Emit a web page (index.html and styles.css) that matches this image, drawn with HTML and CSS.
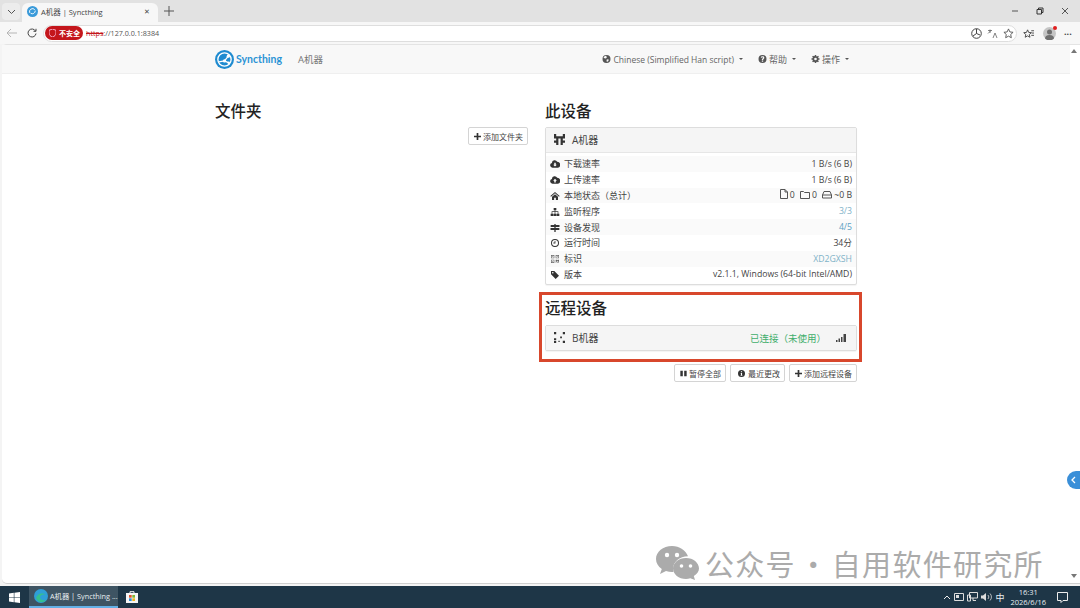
FILE: index.html
```html
<!DOCTYPE html>
<html lang="zh-CN">
<head>
  <meta charset="UTF-8" />
  <meta name="viewport" content="width=device-width, initial-scale=1.0"/>
  <title>A机器 | Syncthing</title>
  <link rel="stylesheet" href="styles.css">
</head>
<body>
  <svg class="sprite" aria-hidden="true">
    <symbol id="i-down" viewBox="0 0 16 12"><path d="M4 12a4 4 0 0 1-1-7.800A4.500 4.500 0 0 1 11.500 2.500 4.800 4.800 0 0 1 12.500 12z"/><path fill="#fff" d="M6.800 4h2.400v3H11L8 10 5 7h1.800z"/></symbol>
    <symbol id="i-up" viewBox="0 0 16 12"><path d="M4 12a4 4 0 0 1-1-7.800A4.500 4.500 0 0 1 11.500 2.500 4.800 4.800 0 0 1 12.500 12z"/><path fill="#fff" d="M6.800 10h2.400V7H11L8 4 5 7h1.800z"/></symbol>
    <symbol id="i-home" viewBox="0 0 14 12"><path d="M7 0l7 6-1 1-6-5-6 5-1-1zM2.500 7L7 3.300 11.500 7v5H8.300V8.500H5.700V12H2.500z"/></symbol>
    <symbol id="i-sitemap" viewBox="0 0 14 12"><path d="M5 0h4v3.500H7.500V5H12v3.500h1.500V12h-4V8.500H11V6H7.500v2.500H9V12H5V8.500h1.500V6H3v2.500h1.500V12h-4V8.500H2V5h4.500V3.500H5z"/></symbol>
    <symbol id="i-signs" viewBox="0 0 14 12"><path d="M6 0h2v1.500h5.500L14 3l-.5 1.500H8v1.500h5.500v3H8V12H6V9H.5L0 7.500.5 6H6V4.500H.5v-3H6z"/></symbol>
    <symbol id="i-clock" viewBox="0 0 12 12"><path fill-rule="evenodd" d="M6 0a6 6 0 1 1 0 12A6 6 0 0 1 6 0zm0 1.500a4.500 4.500 0 1 0 0 9 4.500 4.500 0 0 0 0-9zM5.400 3h1.200v3.600H3.500V5.400h1.900z"/></symbol>
    <symbol id="i-qr" viewBox="0 0 12 12"><path fill-rule="evenodd" d="M0 0h5v5H0zm1 1v3h3V1zm6-1h5v5H7zm1 1v3h3V1zM0 7h5v5H0zm1 1v3h3V8zm1-6h1v1H2zm7 0h1v1H9zM2 9h1v1H2zm5-2h2v1h1V7h2v3h-2V9H9v1H7zm0 4h1v1H7zm2 0h1v1H9zm2 0h1v1h-1z"/></symbol>
    <symbol id="i-tag" viewBox="0 0 12 12"><path fill-rule="evenodd" d="M0 0h5l7 7-5 5-7-7zm2.700 1.500a1.200 1.200 0 1 0 0 2.400 1.200 1.200 0 0 0 0-2.400z"/></symbol>
    <symbol id="i-plus" viewBox="0 0 10 10"><path d="M3.800 0h2.400v3.800H10v2.400H6.200V10H3.800V6.200H0V3.800h3.800z"/></symbol>
    <symbol id="i-pause" viewBox="0 0 10 10"><path d="M.5 1h3.500v8H.5zM6 1h3.500v8H6z"/></symbol>
    <symbol id="i-info" viewBox="0 0 12 12"><path fill-rule="evenodd" d="M6 0a6 6 0 1 1 0 12A6 6 0 0 1 6 0zM5 2.200v1.800h2V2.200zM4.500 5v1.200H5v2.300h-.5v1.200h3V8.500H7V5z"/></symbol>
    <symbol id="i-help" viewBox="0 0 12 12"><path fill-rule="evenodd" d="M6 0a6 6 0 1 1 0 12A6 6 0 0 1 6 0zM5 8.200V10h2V8.200zM6 2C4.600 2 3.700 2.700 3.400 3.900l1.500.4c.2-.6.500-.9 1.100-.9.500 0 .8.300.8.700 0 .9-1.800 1.100-1.800 2.900v.4h1.800c0-1.300 1.900-1.500 1.900-3.400C8.700 2.800 7.500 2 6 2z"/></symbol>
    <symbol id="i-cog" viewBox="0 0 12 12"><path fill-rule="evenodd" d="M5 0h2l.3 1.700 1 .4L9.800 1l1.200 1.300-1 1.500.4 1L12 5v2l-1.600.3-.4 1 1 1.400L9.700 11l-1.400-1-1 .4L7 12H5l-.3-1.600-1-.4-1.400 1L1 9.800l1-1.500-.4-1L0 7V5l1.600-.3.400-1L1 2.300 2.300 1l1.400 1 1-.4zM6 4a2 2 0 1 0 0 4 2 2 0 0 0 0-4z"/></symbol>
    <symbol id="i-globe" viewBox="0 0 12 12"><path fill-rule="evenodd" d="M6 0a6 6 0 1 1 0 12A6 6 0 0 1 6 0zM3 1.800L1.500 4l1.500 1 2 .3L6.500 3.800 5.500 1.200zM8 6.500L6 7l.5 3.500 2-1 1-2.500z"/></symbol>
  </svg>

  <header class="tabbar">
    <div class="tab-list"><svg width="9" height="6" viewBox="0 0 9 6"><path d="M1 1l3.500 3.500L8 1" fill="none" stroke="#555" stroke-width="1"/></svg></div>
    <div class="tab">
      <svg class="tab-icon" width="11" height="11" viewBox="0 0 12 12"><circle cx="6" cy="6" r="6" fill="#3a9ad9"/><path d="M3 7.500a3.300 3.300 0 0 1 5.500-3.500M9 5a3.300 3.300 0 0 1-5 3" fill="none" stroke="#fff"/></svg>
      <span class="tab-title">A机器 | Syncthing</span>
      <span class="tab-close">✕</span>
    </div>
    <svg class="tab-new" width="10" height="10" viewBox="0 0 10 10"><path d="M5 0v10M0 5h10" stroke="#555" stroke-width="1"/></svg>
    <div class="window-btns">
      <svg width="8" height="8" viewBox="0 0 8 8"><path d="M1 4h6" stroke="#555"/></svg>
      <svg width="8" height="8" viewBox="0 0 8 8"><path d="M1 2.500h4.500V7H1zM2.500 2.500V1H7v4.500H5.500" fill="none" stroke="#333"/></svg>
      <svg width="8" height="8" viewBox="0 0 8 8"><path d="M1 1l6 6M7 1L1 7" stroke="#555"/></svg>
    </div>
  </header>

  <div class="toolbar">
    <svg class="nav-back" width="11" height="10" viewBox="0 0 11 10"><path d="M5 1L1 5l4 4M1 5h10" fill="none" stroke="#b5b5b5"/></svg>
    <svg class="nav-reload" width="10" height="10" viewBox="0 0 10 10"><path d="M8.500 3A4 4 0 1 0 9 5.500M9 .8V3.300H6.500" fill="none" stroke="#444"/></svg>
    <div class="address">
      <span class="not-secure"><svg width="7" height="8" viewBox="0 0 7 8"><path d="M3.500 0L7 1.300V4c0 2-1.500 3.300-3.500 4C1.500 7.300 0 6 0 4V1.300z" fill="none" stroke="#fbd" stroke-width=".9"/></svg>不安全</span>
      <span class="url"><s>https</s>://127.0.0.1:8384</span>
      <div class="address-icons">
        <svg width="11" height="11" viewBox="0 0 11 11"><circle cx="5.500" cy="5.500" r="4.800" fill="none" stroke="#444"/><path d="M5.500 1v4.500L9 7M2 8l3.500-2.500" fill="none" stroke="#444"/></svg>
        <svg width="11" height="11" viewBox="0 0 11 11"><path d="M1 2.500h4M3 1.500V5M1 5.500l3-3M6 10l2-5 2 5" fill="none" stroke="#666" stroke-width=".8"/></svg>
        <svg width="11" height="11" viewBox="0 0 12 12"><path d="M6 1l1.500 3.300 3.500.4-2.600 2.400.7 3.500L6 8.900l-3.100 1.700.7-3.500L1 4.700l3.500-.4z" fill="none" stroke="#555"/></svg>
      </div>
    </div>
    <div class="browser-icons">
      <svg width="11" height="11" viewBox="0 0 12 12"><path d="M5 2l1.200 2.800 3 .3-2.300 2 .7 3L5 8.600 2.400 10.100l.7-3-2.300-2 3-.3zM9 3h3M9.500 5.500H12M9 8h3" fill="none" stroke="#444"/></svg>
      <span class="avatar"><svg width="13" height="13" viewBox="0 0 13 13"><circle cx="6.500" cy="6.500" r="6.500" fill="#c5c5c5"/><circle cx="6.500" cy="5" r="2.500" fill="#6f6f6f"/><path d="M2 11.500a4.500 3.500 0 0 1 9 0 6.500 6.500 0 0 1-9 0" fill="#6f6f6f"/></svg><i class="avatar-dot"></i></span>
      <span class="more">···</span>
    </div>
  </div>

  <div class="page">
    <div class="page-main">
      <nav class="navbar">
        <div class="container navbar-inner">
          <div class="brand">
            <svg width="19" height="19" viewBox="0 0 20 20"><circle cx="10" cy="10" r="10" fill="#1f8bd0"/><circle cx="10" cy="10" r="7" fill="none" stroke="#fff" stroke-width="1.400"/><path d="M4 12.500l6-1 4-5M10 11.500l4.500 2" stroke="#fff" stroke-width="1.300" fill="none"/><circle cx="14" cy="6.500" r="1.700" fill="#fff"/><circle cx="10" cy="11.500" r="1.700" fill="#fff"/><circle cx="14.500" cy="13.500" r="1.300" fill="#fff"/></svg>
            <span class="brand-name">Syncthing</span>
            <span class="device-name">A机器</span>
          </div>
          <ul class="nav-right">
            <li class="nav-lang"><svg class="ico"><use href="#i-globe"/></svg>Chinese (Simplified Han script)<i class="caret"></i></li>
            <li><svg class="ico"><use href="#i-help"/></svg>帮助<i class="caret"></i></li>
            <li><svg class="ico"><use href="#i-cog"/></svg>操作<i class="caret"></i></li>
          </ul>
        </div>
      </nav>

      <main class="container columns">
        <section class="col-folders">
          <h1>文件夹</h1>
          <div class="actions">
            <button><svg class="ico-btn"><use href="#i-plus"/></svg>添加文件夹</button>
          </div>
        </section>

        <section class="col-devices">
          <h1>此设备</h1>
          <div class="panel">
            <div class="panel-head">
              <svg class="identicon" viewBox="0 0 5 5"><path d="M0 0h1v1H0zM4 0h1v1H4zM0 1h5v1H0zM1 2h1v1H1zM3 2h1v1H3zM0 3h2v1H0zM3 3h2v1H3zM1 4h1v1H1zM3 4h1v1H3z"/></svg>
              <span>A机器</span>
            </div>
            <table class="stats">
              <tr><td><svg class="ico"><use href="#i-down"/></svg>下载速率</td><td>1 B/s (6 B)</td></tr>
              <tr><td><svg class="ico"><use href="#i-up"/></svg>上传速率</td><td>1 B/s (6 B)</td></tr>
              <tr><td><svg class="ico"><use href="#i-home"/></svg>本地状态（总计）</td><td>
                <svg class="ico-line" width="8" height="10" viewBox="0 0 8 10"><path d="M.5.500h4.500L7.500 3v6.500H.5zM5 .5V3h2.500"/></svg><span class="count">0</span>
                <svg class="ico-line" width="10" height="9" viewBox="0 0 10 9"><path d="M.5 1.500h3l1 1h5v6H.5z"/></svg><span class="count">0</span>
                <svg class="ico-line" width="10" height="9" viewBox="0 0 10 9"><path d="M.5 5L2 1.500h6L9.500 5v3H.5zM.5 5h9"/></svg><span class="count">~0 B</span>
              </td></tr>
              <tr><td><svg class="ico"><use href="#i-sitemap"/></svg>监听程序</td><td class="link">3/3</td></tr>
              <tr><td><svg class="ico"><use href="#i-signs"/></svg>设备发现</td><td class="link link-strong">4/5</td></tr>
              <tr><td><svg class="ico"><use href="#i-clock"/></svg>运行时间</td><td>34分</td></tr>
              <tr><td><svg class="ico ico-qr"><use href="#i-qr"/></svg>标识</td><td class="link">XD2GXSH</td></tr>
              <tr><td><svg class="ico"><use href="#i-tag"/></svg>版本</td><td>v2.1.1, Windows (64-bit Intel/AMD)</td></tr>
            </table>
          </div>

          <div class="remote">
            <h1>远程设备</h1>
            <div class="panel panel-remote">
              <div class="panel-head">
                <svg class="identicon" viewBox="0 0 5 5"><path d="M0 0h1v1H0zM4 0h1v1H4zM2.800 2h.8v.8h-.8zM0 2.800h1v.8H0zM0 4h1v1H0zM4 4h1v1H4zM2 4h.6v.6H2z"/></svg>
                <span>B机器</span>
                <span class="status">已连接（未使用）</span>
                <svg class="signal" width="10" height="8" viewBox="0 0 10 8"><path d="M0 6h1.500v2H0zM2.500 4.500H4V8H2.500zM5 3h1.500v5H5zM7.500 0H10v8H7.500z"/></svg>
              </div>
            </div>
            <span class="highlight"></span>
          </div>

          <div class="actions">
            <button><svg class="ico-btn"><use href="#i-pause"/></svg>暂停全部</button>
            <button><svg class="ico-btn ico-btn-info"><use href="#i-info"/></svg>最近更改</button>
            <button><svg class="ico-btn"><use href="#i-plus"/></svg>添加远程设备</button>
          </div>
        </section>
      </main>

      <div class="side-tab"><svg width="5" height="8" viewBox="0 0 5 8"><path d="M4 1L1 4l3 3" fill="none" stroke="#fff" stroke-width="1.300"/></svg></div>

      <div class="watermark">
        <svg width="43" height="34" viewBox="0 0 43 34"><path fill="#ababab" d="M16 0C7 0 0 5.800 0 13c0 4 2.200 7.500 5.800 10L4 28l6-3c2 .7 4 1 6 1h1.500A11 11 0 0 1 17 23c0-7 6.500-12.500 15-12.700C30 4.300 23.500 0 16 0z"/><path fill="#ababab" d="M30 12c-7.200 0-13 4.700-13 10.500S22.800 33 30 33c1.500 0 3-.2 4.300-.7L39 34l-1.200-4c3-2 5.200-4.500 5.200-7.500C43 16.700 37.200 12 30 12z"/><circle cx="11" cy="9" r="2.200" fill="#fff"/><circle cx="21" cy="9" r="2.200" fill="#fff"/><circle cx="25.500" cy="20" r="1.800" fill="#fff"/><circle cx="34.500" cy="20" r="1.800" fill="#fff"/></svg>
        <span>公众号 · 自用软件研究所</span>
      </div>
    </div>
    <div class="scrollbar">
      <svg width="6" height="4" viewBox="0 0 6 4"><path d="M3 0l3 4H0z" fill="#777"/></svg>
      <svg width="6" height="4" viewBox="0 0 6 4"><path d="M3 4L0 0h6z" fill="#777"/></svg>
    </div>
  </div>

  <footer class="taskbar">
    <svg class="win-logo" width="11" height="11" viewBox="0 0 11 11"><path fill="#fff" d="M0 1.500L4.800.8v4.400H0zM5.400.7L11 0v5.200H5.400zM0 5.800h4.800v4.400L0 9.500zM5.400 5.800H11V11l-5.600-.8z"/></svg>
    <div class="task-item">
      <svg width="14" height="14" viewBox="0 0 14 14"><circle cx="7" cy="7" r="7" fill="#2f9fd8"/><path d="M2 9c1-4 6-6 10-3-2-1-6-.5-6 2.500 0 2 3 3.500 6 2.500-3 3.500-8 3-10-2z" fill="#35c08e"/></svg>
      <span>A机器 | Syncthing ...</span>
    </div>
    <div class="store-icon"><svg width="12" height="12" viewBox="0 0 12 12"><path fill="#f5f5f5" d="M0 2h12v10H0z"/><path d="M4 2V.7h4V2" fill="none" stroke="#f5f5f5"/><path fill="#e2532d" d="M3 4h2.700v2.700H3z"/><path fill="#7cb832" d="M6.300 4H9v2.700H6.300z"/><path fill="#2d8fd8" d="M3 7.300h2.700V10H3z"/><path fill="#f2b21b" d="M6.300 7.300H9V10H6.300z"/></svg></div>
    <div class="tray">
      <svg width="8" height="5" viewBox="0 0 8 5"><path d="M1 4l3-3 3 3" fill="none" stroke="#eee"/></svg>
      <svg width="10" height="10" viewBox="0 0 10 10"><path d="M.5 1.500h9v7h-9z" fill="none" stroke="#ddd"/><path d="M2 3h3v3H2z" fill="#ddd"/></svg>
      <svg width="11" height="10" viewBox="0 0 11 10"><path d="M2.500.500h8v5.500h-8zM.5 3h3v6h-3zM6 6v2.500h3" fill="none" stroke="#ddd"/></svg>
      <svg width="11" height="10" viewBox="0 0 11 10"><path d="M0 3.500h2L5 1v8L2 6.500H0z" fill="#ddd"/><path d="M7 3a3 3 0 0 1 0 4M9 1.500a5 5 0 0 1 0 7" fill="none" stroke="#ddd" stroke-width=".8"/></svg>
      <span class="ime">中</span>
      <div class="clock"><span>16:31</span><span>2026/6/16</span></div>
      <svg class="notify" width="11" height="11" viewBox="0 0 11 11"><path d="M.5.500h10v8H6L4 10.500v-2H.5z" fill="none" stroke="#eee"/></svg>
    </div>
  </footer>
</body>
</html>
```

FILE: styles.css
```css
* {
  box-sizing: border-box;
  margin: 0;
  padding: 0;
}

html, body {
  width: 1080px;
  height: 608px;
  overflow: hidden;
}

body {
  font-family: "Open Sans", "Noto Sans CJK SC", sans-serif;
  background: #f4f4f4;
  color: #333;
  display: flex;
  flex-direction: column;
  font-size: 9px;
}

.sprite {
  display: none;
}

/* browser chrome */
.tabbar {
  height: 22px;
  flex-shrink: 0;
  background: #e2e2e2;
  display: flex;
  align-items: flex-end;
  padding-left: 2px;
}

.tab-list {
  width: 18px;
  height: 17px;
  margin-bottom: 2px;
  background: #ececec;
  border-radius: 4px;
  display: flex;
  align-items: center;
  justify-content: center;
}

.tab {
  width: 136px;
  height: 19px;
  margin-left: 2px;
  background: #f7f7f7;
  border-radius: 6px 6px 0 0;
  display: flex;
  align-items: center;
  padding: 0 8px 2px 5px;
}

.tab-title {
  margin-left: 3px;
  font-size: 7.500px;
  color: #444;
  flex: 1;
}

.tab-close {
  font-size: 7px;
  color: #444;
}

.tab-new {
  margin: 0 0 6px 6px;
}

.window-btns {
  margin-left: auto;
  display: flex;
  gap: 17px;
  padding: 0 11px 7px 0;
}

.toolbar {
  height: 22px;
  flex-shrink: 0;
  background: #f7f7f7;
  display: flex;
  align-items: center;
  padding-left: 6px;
}

.nav-reload {
  margin-left: 10px;
}

.address {
  width: 974px;
  height: 17px;
  margin-left: 6px;
  background: #fff;
  border: 1px solid #dedede;
  border-radius: 9px;
  display: flex;
  align-items: center;
}

.not-secure {
  height: 14px;
  width: 38px;
  margin-left: 1px;
  background: #c4161c;
  color: #fff;
  font-size: 7px;
  font-weight: 700;
  border-radius: 7px;
  display: flex;
  align-items: center;
  gap: 3px;
  padding-left: 4px;
}

.url {
  margin-left: 3px;
  font-size: 7.200px;
  color: #555;
}

.url s {
  color: #c4161c;
}

.address-icons {
  margin-left: auto;
  display: flex;
  gap: 5px;
  padding-right: 2px;
}

.browser-icons {
  display: flex;
  align-items: center;
  margin-left: 6px;
}

.avatar {
  position: relative;
  margin-left: 9px;
  display: flex;
}

.avatar-dot {
  position: absolute;
  top: -1px;
  right: -1px;
  width: 4px;
  height: 4px;
  border-radius: 50%;
  background: #e01f1f;
}

.more {
  margin-left: 8px;
  font-size: 9px;
  font-weight: 700;
  color: #444;
}

/* page */
.page {
  height: 540px;
  flex-shrink: 0;
  margin-left: 2px;
  background: #fff;
  border-radius: 5px 0 0 5px;
  border-top: 1px solid #e4e4e4;
  border-bottom: 1px solid #d0d0d0;
  display: flex;
}

.page-main {
  width: 1068px;
  position: relative;
}

.container {
  width: 642px;
  margin: 0 auto;
}

.navbar {
  height: 29px;
  background: #f8f8f8;
  border-bottom: 1px solid #efefef;
}

.navbar-inner {
  height: 100%;
  display: flex;
  align-items: center;
  justify-content: space-between;
}

.brand {
  display: flex;
  align-items: center;
}

.brand-name {
  margin-left: 2px;
  font-family: Lato, sans-serif;
  font-size: 10.500px;
  font-weight: 700;
  color: #2a93d5;
}

.device-name {
  margin-left: 16px;
  font-size: 9.500px;
  color: #777;
}

.nav-right {
  list-style: none;
  display: flex;
  gap: 15px;
  padding-right: 8px;
  color: #666;
  font-size: 9px;
}

.nav-right li {
  display: flex;
  align-items: center;
}

.nav-right .ico {
  margin-right: 2px;
  fill: #555;
  width: 9px;
}

.nav-right .nav-lang {
  font-size: 8.500px;
}

.caret {
  width: 0;
  height: 0;
  margin-left: 5px;
  border-left: 2.500px solid transparent;
  border-right: 2.500px solid transparent;
  border-top: 2.500px solid #555;
}

.columns {
  display: grid;
  grid-template-columns: 313px 312px;
  gap: 17px;
}

h1 {
  font-size: 15.500px;
  font-weight: 500;
  color: #222;
  line-height: 20px;
  margin: 27px 0 6px;
}

.panel {
  background: #fff;
  border: 1px solid #ddd;
  border-radius: 2px;
  box-shadow: 0 1px 1px rgba(0,0,0,0.05);
}

.panel-head {
  height: 25px;
  background: #f5f5f5;
  border-bottom: 1px solid #e6e6e6;
  display: flex;
  align-items: center;
  padding: 0 10px 1px 8px;
  font-size: 10px;
  color: #444;
}

.identicon {
  width: 11px;
  height: 11px;
  margin-right: 7px;
  fill: #333;
}

.stats {
  width: 100%;
  border-collapse: collapse;
  margin: 3px 0 2px;
}

.stats tr {
  height: 15.800px;
}

.stats tr:nth-child(odd) {
  background: #fafafa;
}

.stats td {
  padding: 0 4px;
  color: #444;
  white-space: nowrap;
}

.stats td:last-child {
  text-align: right;
  font-size: 8.700px;
}

.ico {
  width: 10px;
  height: 8px;
  margin-right: 4px;
  fill: #333;
  vertical-align: -1px;
}

.ico-qr {
  fill: #666;
}

.ico-line {
  fill: none;
  stroke: #555;
  vertical-align: -1px;
}

.count {
  margin: 0 3px 0 2px;
}

.count:last-child {
  margin-right: 0;
}

.stats .link {
  color: #7fb2c8;
}

.stats .link-strong {
  color: #5b9fc4;
}

.remote {
  position: relative;
}

.remote h1 {
  margin: 13px 0 7px;
}

.panel-remote .panel-head {
  height: 24px;
  border-bottom: 0;
}

.status {
  margin-left: auto;
  font-size: 9.500px;
  color: #3fae6b;
}

.signal {
  margin-left: 10px;
  fill: #444;
}

.highlight {
  position: absolute;
  top: -6px;
  left: -6px;
  right: -5px;
  bottom: -11px;
  border: 3px solid #d8472c;
  pointer-events: none;
}

.actions {
  display: flex;
  justify-content: flex-end;
  gap: 4px;
}

.col-devices > .actions {
  margin-top: 13px;
}

button {
  height: 18px;
  padding: 0 4px 0 5px;
  background: #fff;
  border: 1px solid #d4d4d4;
  border-radius: 2px;
  color: #444;
  font-family: inherit;
  font-size: 8px;
  display: flex;
  align-items: center;
}

.ico-btn {
  width: 7px;
  height: 7px;
  margin-right: 2px;
  fill: #333;
}

.ico-btn-info {
  width: 7px;
  height: 7px;
  margin: 0 3px 0 2px;
}

.side-tab {
  position: absolute;
  top: 426px;
  right: -10px;
  width: 13px;
  height: 18px;
  background: #3a8fd8;
  border-radius: 9px 0 0 9px;
  display: flex;
  align-items: center;
  justify-content: center;
  z-index: 2;
}

.watermark {
  position: absolute;
  left: 654px;
  top: 497px;
  display: flex;
  align-items: center;
  gap: 6px;
  color: #ababab;
  font-size: 29px;
  letter-spacing: 1.300px;
  word-spacing: -5px;
  white-space: nowrap;
  font-family: "Noto Sans CJK SC", sans-serif;
}

.scrollbar {
  width: 8px;
  display: flex;
  flex-direction: column;
  justify-content: space-between;
  align-items: center;
  padding: 4px 0 5px;
}

/* windows taskbar */
.taskbar {
  margin-top: auto;
  height: 22px;
  flex-shrink: 0;
  background: #1e3647;
  display: flex;
  align-items: center;
  padding-left: 9px;
  color: #e8eef2;
}

.task-item {
  width: 89px;
  height: 22px;
  margin-left: 9px;
  background: #3e5463;
  border-bottom: 2px solid #63b0e6;
  display: flex;
  align-items: center;
  gap: 2px;
  padding-left: 5px;
  font-size: 7.300px;
  white-space: nowrap;
}

.store-icon {
  margin-left: 8px;
  display: flex;
}

.tray {
  margin-left: auto;
  display: flex;
  align-items: center;
  gap: 3px;
  padding-right: 12px;
}

.ime {
  font-size: 9px;
}

.clock {
  margin-left: 3px;
  display: flex;
  flex-direction: column;
  align-items: center;
  font-size: 7.500px;
  line-height: 10px;
}

.notify {
  margin-left: 8px;
}
```
